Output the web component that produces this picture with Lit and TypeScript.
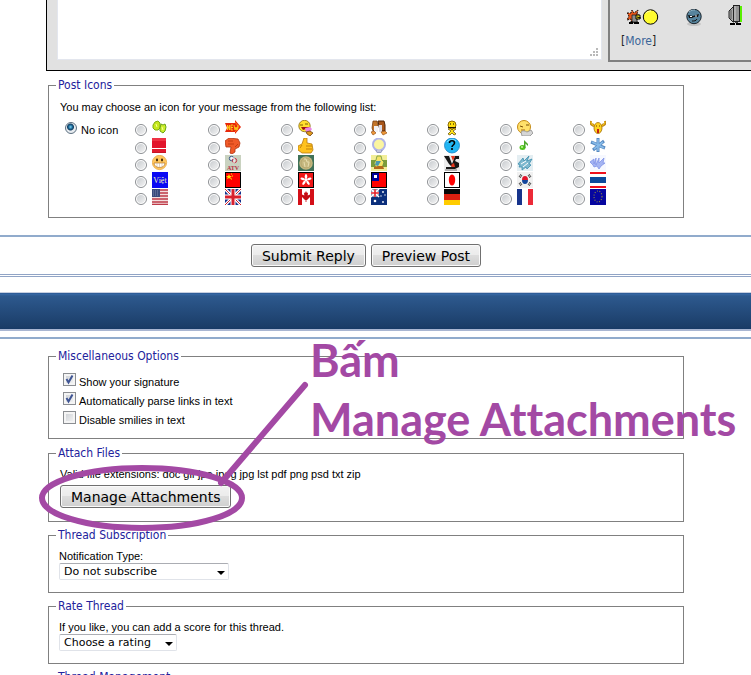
import { LitElement, html, css, svg, SVGTemplateResult } from "lit";
import { customElement } from "lit/decorators.js";

interface PostIcon {
  name: string;
  art: SVGTemplateResult;
}

const icon = (name: string, art: SVGTemplateResult): PostIcon => ({ name, art });

const postIcons: PostIcon[] = [
  icon("Leaves", svg`
    <path d="M1 5 L3 2 L6 1 L8 3 L8 8 L6 10 L3 10 L1 8Z" fill="#c6e81c" stroke="#7fae12"/>
    <path d="M8 8 L9 4 L11 5 L13 4 L14 7 L13 11 L11 13 L8 11Z" fill="#cdee2c" stroke="#6aa413"/>
    <path d="M4 4 L5 7 M10 7 L11 10" stroke="#f4ff9c"/>`),
  icon("New", svg`
    <path d="M0 3 L10 3 L10 0 L16 7 L10 14 L10 12 L0 12 L2 8Z" fill="#e8280a"/>
    <path d="M10 2 L14 7 L10 12" fill="none" stroke="#ff7a1c"/>
    <path d="M2.500 10V5L4.500 10V5M8 5H6V10H8M6 7.500H8M9 5L10 10L11 7L12 10L13 5" fill="none" stroke="#ffd11a" stroke-width=".9"/>`),
  icon("Tongue", svg`
    <circle cx="6.500" cy="6" r="5.700" fill="#ffe02e" stroke="#8c6a10" stroke-width=".8"/>
    <path d="M2 5h3M7 4h3" stroke="#5a3d00" stroke-width=".8"/><path d="M3 7h8v2H8L5 10Z" fill="#a01414"/>
    <path d="M7 8l5-1 2 2-2 3H8Z" fill="#ea84e4"/><path d="M8 12l4-1 3 2-3 3-3-2Z" fill="#e09a1c" stroke="#5d300a" stroke-width=".7"/>`),
  icon("Talk", svg`
    <path d="M2 1h4l1 4-1 4-4 2-1-3Z" fill="#c2752a" stroke="#6e3408" stroke-width=".7"/><path d="M7 1h6l1 4v6h-5Z" fill="#a9561a" stroke="#4e2406"/>
    <path d="M3 6h4v6H3Z" fill="#f2f2f6"/><path d="M8 5h3v7H8Z" fill="#dcdce8"/><path d="M0 12l3-1 2 2-3 2ZM10 12l4-1 2 2-4 2Z" fill="#f09a3a" stroke="#8a4208" stroke-width=".6"/>`),
  icon("Crossed arms", svg`
    <circle cx="8" cy="5" r="4" fill="#ffdf10" stroke="#8a6800"/><path d="M6 4h1M9 4h1" stroke="#000"/>
    <path d="M4 7h8v1H4Z" fill="#221800"/><path d="M4 9l3 2-3 3 2 1 2-2 2 2 2-1-3-3 3-2-2-1-2 2-2-2Z" fill="#ffe21a" stroke="#5a4400" stroke-width=".7"/>`),
  icon("Sleepy", svg`
    <circle cx="7" cy="7" r="6.500" fill="#ffe06a" stroke="#c48a14"/><path d="M3 6l3 1M9 5l3 0" stroke="#7a4c05"/>
    <path d="M4 10h4" stroke="#a86a10"/><path d="M4 12c2-2 4-1 6 0l4-2 2 3-3 3H5Z" fill="#d6d6d6" stroke="#8d8d8d" stroke-width=".8"/>`),
  icon("Horns", svg`
    <path d="M1 1c-1 3 1 5 4 5M15 1c1 3-1 5-4 5M1 4l3 1M15 4l-3 1" fill="none" stroke="#b87c0c" stroke-width="2.200"/>
    <path d="M1 1.500c0 3 1 3.500 4 4M15 1.500c0 3-1 3.500-4 4" fill="none" stroke="#ffd21f"/>
    <ellipse cx="8" cy="8" rx="4" ry="5.500" fill="#ffd21f" stroke="#a06c08" stroke-width=".8"/><path d="M6 6h1M9 6h1" stroke="#6b4100"/><path d="M7 9h2v4H7Z" fill="#c62114"/>`),

  icon("Red card", svg`
    <path d="M0 0h14v10H0Z" fill="#e2142b"/><path d="M0 0h14v3H0Z" fill="#ee3244"/><path d="M0 11h14v4H0Z" fill="#e01a2e"/><path d="M0 14h14v1H0Z" fill="#c81424"/>`),
  icon("Thumbs down", svg`
    <path d="M0 3l4-3 9 1 2 4-1 4-4 2v3l-3 2-2-1 1-6-5 0Z" fill="#f05a28" stroke="#b03410" stroke-width=".8"/><path d="M3 3h5M3 6h6M10 9l3-3" stroke="#c23c12" fill="none"/>`),
  icon("Thumbs up", svg`
    <path d="M0 8l4-2 2-6 3 0v5l5 1 1 6-2 3H4l-4-3Z" fill="#ffc21f" stroke="#b77a0c" stroke-width=".8"/><path d="M8 8h6M8 11h6M4 7l-2 3" stroke="#c2830d" fill="none"/>`),
  icon("Light bulb", svg`
    <circle cx="8" cy="6.500" r="7" fill="#b0b4e8"/><circle cx="8" cy="6.500" r="5" fill="#fbf5a0"/><path d="M4 12h8l-2 3H6Z" fill="#969cc4"/><path d="M6 13h4" stroke="#e9eaf8"/>`),
  icon("Question", svg`
    <circle cx="8" cy="7.500" r="7.500" fill="#22b5f2" stroke="#1880c4" stroke-width=".8"/><path d="M3 4c2-3 7-3 9-1" stroke="#8ee3ff" fill="none"/><path d="M5.500 5c0-3 5-3 5 0 0 2-2.500 2-2.500 4M8 10v2" stroke="#000" stroke-width="1.600" fill="none"/>`),
  icon("Music", svg`
    <ellipse cx="5.500" cy="9.500" rx="3" ry="2.500" fill="#4fc41c"/><path d="M7 10V2l4 4v2L8.500 5.500V10Z" fill="#4aa828"/><circle cx="5" cy="9" r="1" fill="#c4f79c"/>`),
  icon("Snowflake", svg`
    <path d="M8 0v14M1 4l14 6M14 3L3 12" stroke="#5688c0" stroke-width="3"/><path d="M8 1v12M2 4l12 6M13 4L4 11" stroke="#86bae8" stroke-width="1.600"/>`),

  icon("Grin", svg`
    <circle cx="7.500" cy="7.500" r="7.200" fill="#ffc65c" stroke="#e39a30" stroke-width=".6"/><ellipse cx="5" cy="5" rx="1" ry="1.400" fill="#3b2406"/><ellipse cx="10" cy="5" rx="1" ry="1.400" fill="#3b2406"/>
    <path d="M2 8h11c0 6-11 6-11 0Z" fill="#fff" stroke="#a36215" stroke-width=".6"/><path d="M5 8v4M7.500 8v4M10 8v4" stroke="#cfa877" stroke-width=".5"/>`),
  icon("ATV", svg`
    <rect width="16" height="16" fill="#c9d2c0"/><circle cx="6.500" cy="3.500" r="2.200" fill="#dfe6f0" stroke="#3d5a86"/><circle cx="9.500" cy="5.500" r="2.200" fill="none" stroke="#c8324a"/><path d="M6 3h3v5" stroke="#fff" fill="none"/>
    <text x="8" y="15" text-anchor="middle" font-family="Liberation Serif, serif" font-size="6" font-weight="700" fill="#b8303f">ATV</text>`),
  icon("Seal", svg`
    <rect width="16" height="16" fill="#3f7158"/><circle cx="8" cy="8" r="6.800" fill="#c6b880"/><circle cx="8" cy="8" r="5" fill="none" stroke="#a99c64" stroke-width=".6"/><path d="M6 4h2l1 3 2 0-1 5M6 7l1 5" fill="none" stroke="#e6dcae"/>`),
  icon("Star", svg`
    <rect width="16" height="16" fill="#f2ee98"/><path d="M0 5h16v7H0Z" fill="#7c9c3c"/><path d="M6 1h4l1 4 2 2-2 6H5L3 8l2-3Z" fill="#f4e468" stroke="#5a8a38" stroke-width=".7"/><path d="M5 6h5l-3 5-3-1Z" fill="#4c9ab0"/><path d="M3 12l4-1h5l1 3H3Z" fill="#b4691c"/>`),
  icon("VS", svg`
    <rect width="16" height="16" fill="#ececec"/><path d="M0 1h5l3 8 3-8h4v3h-3l-1 2 4 2v4l-4 2H2v-2h6L5 9Z" fill="#161616"/><path d="M7 1h4L9 6Z" fill="#e6361c"/><path d="M7 10l3-2 1 4H8Z" fill="#e6361c"/><path d="M1 15h12" stroke="#777"/>`),
  icon("Waves", svg`
    <rect width="16" height="16" fill="#e4eef2"/><path d="M1 9L6 3l1 3 5-5-2 5 5-2-3 5 2 1-4 4-1-2-4 3v-3l-3 0 1-2Z" fill="#7fb9cf" stroke="#3f8fae" stroke-width=".8"/><path d="M4 9l5-3M6 12l5-4" stroke="#fff"/>`),
  icon("Scribble", svg`
    <rect width="16" height="16" fill="#f6f8ff"/><path d="M0 7l4-3v5l2-6v7l3-7v5l5-5-1 5 2 0-4 3-2 3-2-3-3 1-1-2Z" fill="#a4b4f2" stroke="#8093e8" stroke-width=".8"/>`),

  icon("Việt", svg`
    <rect width="16" height="16" fill="#0909f4"/><text x="8" y="11" text-anchor="middle" font-family="Liberation Serif, serif" font-size="8" fill="#f4f4b4">Việt</text>`),
  icon("China", svg`
    <rect x=".5" y=".5" width="15" height="15" fill="#fe0000" stroke="#000"/><path d="M4 2l.8 2H7L5.300 5.200 6 7.200 4 6 2 7.200l.7-2L1 4h2.200Z" fill="#ffe800"/><path d="M6 2h1M7 4h1M6 7h1" stroke="#ffe800"/>`),
  icon("Hong Kong", svg`
    <rect x=".5" y=".5" width="15" height="15" fill="#f01616" stroke="#000"/><g fill="#fff"><ellipse cx="8" cy="4.500" rx="1.300" ry="2.500"/><ellipse cx="8" cy="4.500" rx="1.200" ry="2.300" transform="rotate(72 8 8)"/><ellipse cx="8" cy="4.500" rx="1.200" ry="2.300" transform="rotate(144 8 8)"/><ellipse cx="8" cy="4.500" rx="1.200" ry="2.300" transform="rotate(216 8 8)"/><ellipse cx="8" cy="4.500" rx="1.200" ry="2.300" transform="rotate(288 8 8)"/><circle cx="8" cy="8" r="1.500"/></g>`),
  icon("Taiwan", svg`
    <rect x=".5" y=".5" width="15" height="15" fill="#fe0000" stroke="#000"/><rect x="1" y="1" width="7" height="8" fill="#000099"/><rect x="3" y="3" width="3" height="3" fill="#fff"/>`),
  icon("Japan", svg`
    <rect x=".5" y=".5" width="15" height="15" fill="#fff" stroke="#000"/><ellipse cx="8" cy="8" rx="3.200" ry="5.500" fill="#fe0000"/>`),
  icon("South Korea", svg`
    <rect width="16" height="16" fill="#f0f0f0"/><path d="M5 8a3 4 0 0 1 6 0Z" fill="#e2132a"/><path d="M5 8a3 4 0 0 0 6 0Z" fill="#12459c"/><path d="M2 5l2-3M3 6l2-3M12 2l2 3M11 3l2 3M2 11l2 3M3 10l2 3M14 11l-2 3M13 10l-2 3" stroke="#222" stroke-width=".8"/>`),
  icon("Thailand", svg`
    <rect width="16" height="16" fill="#fff"/><path d="M0 0h16v2H0ZM0 14h16v2H0Z" fill="#f0101c"/><rect y="5" width="16" height="6" fill="#0c4a9c"/>`),

  icon("United States", svg`
    <rect width="16" height="16" fill="#f3dede"/><path d="M0 1h16M0 4h16M0 7h16M0 10h16M0 13h16M0 15.500h16" stroke="#bf3b48" stroke-width="1.400"/><rect width="8" height="8" fill="#3a4a7c"/><path d="M1 2h6M1 4h6M1 6h6" stroke="#a9b3cf" stroke-width=".6" stroke-dasharray="1 1"/>`),
  icon("United Kingdom", svg`
    <rect width="16" height="16" fill="#12318c"/><path d="M0 0l16 16M16 0L0 16" stroke="#fff" stroke-width="3"/><path d="M0 0l16 16M16 0L0 16" stroke="#d8202e"/><path d="M8 0v16M0 8h16" stroke="#fff" stroke-width="5"/><path d="M8 0v16M0 8h16" stroke="#d8202e" stroke-width="3"/>`),
  icon("Canada", svg`
    <rect width="16" height="16" fill="#fff"/><path d="M0 0h4v16H0ZM12 0h4v16h-4Z" fill="#d40f18"/><path d="M8 2l1 2 1-.5-.3 3L12 5.500v2.500l-3 3h-.6v2h-.8v-2H7l-3-3V5.500l2.300 1L6 3.500 7 4Z" fill="#c40c14"/>`),
  icon("Australia", svg`
    <rect width="16" height="16" fill="#0b2f7c"/><path d="M0 0l8 8M8 0L0 8" stroke="#fff" stroke-width="1.600"/><path d="M4 0v8M0 4h8" stroke="#fff" stroke-width="3"/><path d="M4 0v8M0 4h8" stroke="#e0202c" stroke-width="1.600"/><g fill="#fff"><circle cx="4" cy="12" r="1.300"/><circle cx="12" cy="3" r=".9"/><circle cx="10" cy="7" r=".7"/><circle cx="14" cy="6" r=".7"/><circle cx="12" cy="13" r=".9"/></g>`),
  icon("Germany", svg`
    <rect width="16" height="6" fill="#080808"/><rect y="5" width="16" height="6" fill="#dc2010"/><rect y="11" width="16" height="5" fill="#ffcc00"/>`),
  icon("France", svg`
    <rect width="6" height="16" fill="#17348c"/><rect x="5" width="6" height="16" fill="#fff"/><rect x="11" width="5" height="16" fill="#ec2a38"/>`),
  icon("European Union", svg`
    <rect width="16" height="16" fill="#0606a0"/><ellipse cx="8" cy="7.500" rx="4" ry="5.500" fill="none" stroke="#8c8440" stroke-width="1.200" stroke-dasharray="1 1.600"/>`),
];

const explodingSmiley = svg`
  <path d="M0 4l4 0 1-3 2 3 4-3-1 4 3 2-3 2v4H4l0-3-4 1 2-4Z" fill="#e65318" stroke="#22120a" stroke-dasharray="2 1"/>
  <path d="M5 6h5v7H5Z" fill="#8c8c8c" stroke="#222" stroke-width=".8"/><path d="M2 14h4l-2-1M7 14h5" stroke="#000" stroke-width="2"/>
  <path d="M9 6h4v4H9Z" fill="#f6e520" stroke="#000"/><path d="M10 8l4 1" stroke="#000"/>
  <circle cx="23.500" cy="8" r="7.200" fill="#fffc30" stroke="#000"/><path d="M19 4c2-2 4-2 5-2" stroke="#fffcb4" fill="none"/>`;

const coolSmiley = svg`
  <ellipse cx="8" cy="15" rx="7" ry="2" fill="#c4c4c4"/>
  <circle cx="8" cy="7.500" r="7.200" fill="#57849d" stroke="#18232c"/>
  <path d="M3 3c2-2 4-2 6-2" stroke="#8db4c7" fill="none"/>
  <path d="M2 6l5 1 6-2-1 3H9L8 8 6 9H3Z" fill="#111"/><path d="M4 7.500h2M9 7h2" stroke="#fff"/><path d="M6 12c2 0 4 0 5-2" stroke="#111" fill="none"/>`;

const monitor = svg`
  <path d="M1 6l4-4h1v15H5l-4-4Z" fill="#aaa" stroke="#222"/><path d="M3 5v9" stroke="#555"/>
  <rect x="5.500" y=".5" width="6" height="16" fill="#949494" stroke="#222"/><path d="M7 1v15" stroke="#ccc"/>
  <rect x="12" y="1" width="2" height="16" fill="#58f000"/><path d="M2 19h5M8 19h5" stroke="#000" stroke-width="2"/><path d="M7 17h3v1H7Z" fill="#444"/>`;

@customElement("app-root")
export class AppRoot extends LitElement {
  static styles = css`
    :host {
      display: block;
      height: 100vh;
      overflow: hidden;
      background: #fff;
      color: #000;
      font: 11px/14px "Liberation Sans", Arial, sans-serif;
    }
    * { box-sizing: border-box; }
    svg { display: block; }
    p { margin: 0; }

    input[type="radio"] {
      appearance: none;
      flex: none;
      width: 12px;
      height: 12px;
      margin: 0;
      border: 1px solid #8b8e92;
      border-radius: 50%;
      background: linear-gradient(135deg, #c4c8cc, #f6f6f6);
      background-clip: content-box;
      padding: 1px;
    }
    input[type="radio"]:checked {
      border-color: #5c6f80;
      background: radial-gradient(circle at 45% 40%, #7fd4f4 0, #1a6796 2px, #123d60 3px, #e8ecf0 4px);
    }
    input[type="checkbox"] {
      appearance: none;
      width: 13px;
      height: 13px;
      margin: 0;
      border: 1px solid #8b8e92;
      background: linear-gradient(135deg, #c8ccd1, #f8f8f8);
      box-shadow: inset 0 0 0 2px #f4f4f4;
    }

    .editor {
      display: flex;
      align-items: flex-start;
      gap: 6px;
      margin-left: 46px;
      padding: 0 0 8px 10px;
      background: #e1e1e1;
      border-left: 1px solid #000;
      border-bottom: 1px solid #000;
    }
    .message { position: relative; flex: 1; min-width: 0; }
    .message textarea {
      display: block;
      width: 100%;
      height: 60px;
      border: 1px solid #e3e6ee;
      border-top: 0;
      background: #fff;
      resize: none;
      outline: none;
    }
    .grip { position: absolute; right: 4px; bottom: 4px; }
    .smilies {
      width: 143px;
      height: 62px;
      padding: 5px 8px 0 11px;
      border-left: 2px solid #808080;
      border-bottom: 2px solid #808080;
      font: 12px/16px "DejaVu Sans Condensed", "DejaVu Sans", sans-serif;
      color: #222;
    }
    .faces { display: flex; justify-content: space-between; height: 28px; padding-left: 6px; }
    .faces svg { margin-top: 4px; }
    .faces .tall { margin-top: 0; }
    .smilies a { color: #3a6598; text-decoration: none; }

    fieldset {
      min-width: 0;
      margin: 0 67px 6px 48px;
      padding: 7px 11px 12px 10px;
      border: 1px solid #808080;
    }
    legend {
      margin-left: -3px;
      padding: 0 2px;
      font: 12px/14px "DejaVu Sans Condensed", "DejaVu Sans", sans-serif;
      color: #22229c;
    }
    .icons { margin-top: 7px; margin-bottom: 0; padding: 8px 11px 11px; }
    .icons legend { margin-left: -4px; }
    .choices { display: grid; grid-template-columns: 75px 1fr; margin-top: 6px; }
    .none { display: flex; align-items: flex-start; gap: 4px; padding: 2px 0 0 5px; }
    .none span { margin-top: 1px; }
    .grid {
      display: grid;
      grid-template-columns: repeat(7, 73px);
      grid-template-rows: 18px repeat(4, 17px);
    }
    .choice { display: flex; gap: 5px; padding-top: 4px; }
    .choice svg { margin-top: -4px; }

    button {
      height: 23px;
      padding: 0 10px;
      border: 1px solid #707070;
      border-radius: 3px;
      background: linear-gradient(#f2f2f2 0, #ebebeb 50%, #dddddd 50%, #cfcfcf);
      box-shadow: inset 0 0 0 1px #fafafa;
      font: 14px/20px "DejaVu Sans", Verdana, sans-serif;
      color: #000;
      white-space: nowrap;
    }
    .actions {
      display: flex;
      justify-content: center;
      gap: 5px;
      margin-top: 17px;
      padding: 7px 19px 7px 0;
      border-top: 2px solid #91abcc;
      border-bottom: 3px double #91a4c6;
      background: #fff;
    }
    .band {
      height: 39px;
      margin-top: 15px;
      border-top: 1px solid #c6cfe0;
      border-bottom: 2px solid #a9b6d2;
      background: linear-gradient(#24508a 0, #3769a6 1px, #2d598e 3px, #1b3d68 34px, #173a66);
    }

    .options {
      position: relative;
      margin-top: 6px;
      padding-top: 10px;
      border-top: 2px solid #91abcc;
    }
    .misc { margin-bottom: 7px; padding: 9px 14px; }
    .misc legend { margin-left: -7px; }
    .check { display: flex; gap: 3px; height: 19px; padding-top: 1px; }
    .caption { margin-top: 2px; }
    .box { position: relative; width: 13px; height: 13px; }
    .box svg { position: absolute; inset: 0; pointer-events: none; }
    .attach { padding: 7px 11px 13px; }
    .attach legend { margin-left: -4px; }
    .attach button { display: block; margin-top: 4px; }

    .picker { position: relative; display: block; width: max-content; }
    .picker::after {
      content: "";
      position: absolute;
      right: 4px;
      top: 8px;
      border: 4px solid transparent;
      border-top-color: #000;
      border-bottom: 0;
      pointer-events: none;
    }
    select {
      appearance: none;
      display: block;
      width: 170px;
      height: 17px;
      padding: 0 4px;
      border: 1px solid #e0e3e9;
      border-top-color: #abadb3;
      border-radius: 2px;
      background: #fff;
      font: 11px/15px "DejaVu Sans", Verdana, sans-serif;
      color: #000;
    }
    .short select { width: 118px; }

    .mark { position: absolute; left: 38px; top: 38px; pointer-events: none; }
    .callout {
      position: absolute;
      left: 310px;
      top: -8px;
      font: 700 45px/59px Lato, "Noto Sans", sans-serif;
      font-variant-ligatures: none;
      color: #a349a4;
      white-space: nowrap;
      pointer-events: none;
    }
  `;

  private checkbox(label: string, checked: boolean) {
    return html`<label class="check">
      <span class="box"><input type="checkbox" .checked=${checked} />
        ${checked ? html`<svg width="13" height="13" viewBox="0 0 13 13"><path d="M3.500 6l2 3.500L9.500 2.500" fill="none" stroke="#3f5594" stroke-width="2" /></svg>` : ""}
      </span>
      <span class="caption">${label}</span>
    </label>`;
  }

  render() {
    return html`
      <section class="editor">
        <div class="message">
          <textarea aria-label="Message"></textarea>
          <svg class="grip" width="8" height="8" viewBox="0 0 8 8" fill="#b9b9b9">
            <path d="M6 0h2v2H6ZM3 3h2v2H3ZM6 3h2v2H6ZM0 6h2v2H0ZM3 6h2v2H3ZM6 6h2v2H6Z" />
          </svg>
        </div>
        <aside class="smilies">
          <div class="faces">
            <svg width="32" height="17" viewBox="0 0 32 17">${explodingSmiley}</svg>
            <svg width="16" height="17" viewBox="0 0 16 17">${coolSmiley}</svg>
            <svg class="tall" width="15" height="20" viewBox="0 0 15 20">${monitor}</svg>
          </div>
          [<a href="#smilies">More</a>]
        </aside>
      </section>

      <fieldset class="icons">
        <legend>Post Icons</legend>
        <p>You may choose an icon for your message from the following list:</p>
        <div class="choices">
          <label class="none"><input type="radio" name="icon" checked /><span>No icon</span></label>
          <div class="grid">
            ${postIcons.map((p) => html`<label class="choice">
              <input type="radio" name="icon" aria-label=${p.name} />
              <svg width="16" height="16" viewBox="0 0 16 16">${p.art}</svg>
            </label>`)}
          </div>
        </div>
      </fieldset>

      <div class="actions">
        <button type="button">Submit Reply</button>
        <button type="button">Preview Post</button>
      </div>
      <div class="band"></div>

      <section class="options">
        <fieldset class="misc">
          <legend>Miscellaneous Options</legend>
          ${this.checkbox("Show your signature", true)}
          ${this.checkbox("Automatically parse links in text", true)}
          ${this.checkbox("Disable smilies in text", false)}
        </fieldset>
        <fieldset class="attach">
          <legend>Attach Files</legend>
          <p>Valid file extensions: doc gif jpe jpeg jpg lst pdf png psd txt zip</p>
          <button type="button">Manage Attachments</button>
        </fieldset>
        <fieldset>
          <legend>Thread Subscription</legend>
          <label for="notify">Notification Type:</label>
          <span class="picker"><select id="notify"><option>Do not subscribe</option></select></span>
        </fieldset>
        <fieldset>
          <legend>Rate Thread</legend>
          <label for="rating">If you like, you can add a score for this thread.</label>
          <span class="picker short"><select id="rating"><option>Choose a rating</option></select></span>
        </fieldset>
        <fieldset>
          <legend>Thread Management</legend>
        </fieldset>

        <svg class="mark" width="272" height="160" viewBox="0 0 272 160" fill="none" stroke="#a349a4">
          <ellipse cx="104" cy="121" rx="100" ry="30" stroke-width="6" />
          <path d="M267 8L183 106" stroke-width="6" stroke-linecap="round" />
        </svg>
        <div class="callout">Bấm<br />Manage Attachments</div>
      </section>
    `;
  }
}
